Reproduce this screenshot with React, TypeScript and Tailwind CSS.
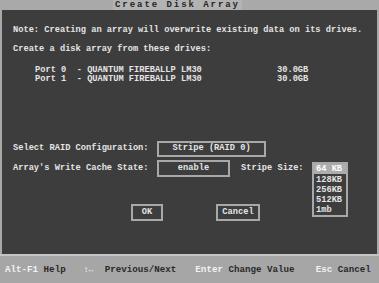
const mono = { fontFamily: '"Liberation Mono", "DejaVu Sans Mono", monospace' }

function Box({ w, h, children }: { w: string; h: string; children: React.ReactNode }) {
  return (
    <div className={`${w} ${h} flex items-center justify-center border-2 border-[#a8a8a8] text-[#e4e4e4]`}>
      {children}
    </div>
  )
}

export default function App() {
  return (
    <div className="w-[379px] h-[283px] bg-[#a9a9a9] font-bold overflow-hidden" style={mono}>
      {/* Title bar */}
      <div className="h-[10px] flex items-start pl-[113px]">
        <span className="bg-[#b3b3b3] px-[2px] h-[10px] text-[9px] leading-[10px] tracking-[1.95px] text-[#262626]">
          Create Disk Array
        </span>
      </div>

      {/* Main panel */}
      <div className="mx-[2px] h-[244px] bg-[#3d3d3d] pl-[11px] pt-[15px] text-[8.7px] text-[#e4e4e4]">
        <div className="leading-[10px]">Note: Creating an array will overwrite existing data on its drives.</div>
        <div className="mt-[9px] leading-[10px]">Create a disk array from these drives:</div>

        <div className="mt-[12px] ml-[22px] leading-[9px]">
          <div className="flex">
            <span className="w-[242px] whitespace-pre">Port 0  - QUANTUM FIREBALLP LM30</span>
            <span>30.0GB</span>
          </div>
          <div className="flex">
            <span className="w-[242px] whitespace-pre">Port 1  - QUANTUM FIREBALLP LM30</span>
            <span>30.0GB</span>
          </div>
        </div>

        {/* RAID configuration */}
        <div className="mt-[57px] flex items-center">
          <span className="w-[144px]">Select RAID Configuration:</span>
          <Box w="w-[109px]" h="h-[16px]">Stripe (RAID 0)</Box>
        </div>

        {/* Write cache + stripe size */}
        <div className="mt-[3px] flex items-center">
          <span className="w-[144px]">Array's Write Cache State:</span>
          <Box w="w-[73px]" h="h-[17px]">enable</Box>
          <span className="ml-[11px] w-[71px]">Stripe Size:</span>
          <div className="relative w-[36px] h-[17px]">
            <div className="absolute left-0 top-[2px] w-[36px] h-[55px] border-2 border-[#a8a8a8] bg-[#3d3d3d] leading-[10px]">
              <div className="bg-[#adadad] text-white h-[10px] pl-[2px] whitespace-pre">64 KB</div>
              <div className="pl-[2px] mt-[1px]">128KB</div>
              <div className="pl-[2px]">256KB</div>
              <div className="pl-[2px]">512KB</div>
              <div className="pl-[2px]">1mb</div>
            </div>
          </div>
        </div>

        {/* Buttons */}
        <div className="mt-[27px] flex">
          <div className="ml-[118px]">
            <Box w="w-[32px]" h="h-[17px]">OK</Box>
          </div>
          <div className="ml-[53px]">
            <Box w="w-[44px]" h="h-[17px]">Cancel</Box>
          </div>
        </div>
      </div>

      {/* Status bar */}
      <div className="h-[29px] border-t-2 border-[#c4c4c4] bg-[#a6a6a6] flex items-center pl-[5px] text-[9.2px] text-[#2a2a2a] whitespace-pre">
        <span>
          <span className="text-[#f2f2f2]">Alt-F1</span> Help
        </span>
        <span className="ml-[18px] w-[16px] text-[8px] text-[#f2f2f2]">↕↔</span>
        <span className="ml-[5px]">Previous/Next</span>
        <span className="ml-[19px]">
          <span className="text-[#f2f2f2]">Enter</span> Change Value
        </span>
        <span className="ml-[21px]">
          <span className="text-[#f2f2f2]">Esc</span> Cancel
        </span>
      </div>
    </div>
  )
}
